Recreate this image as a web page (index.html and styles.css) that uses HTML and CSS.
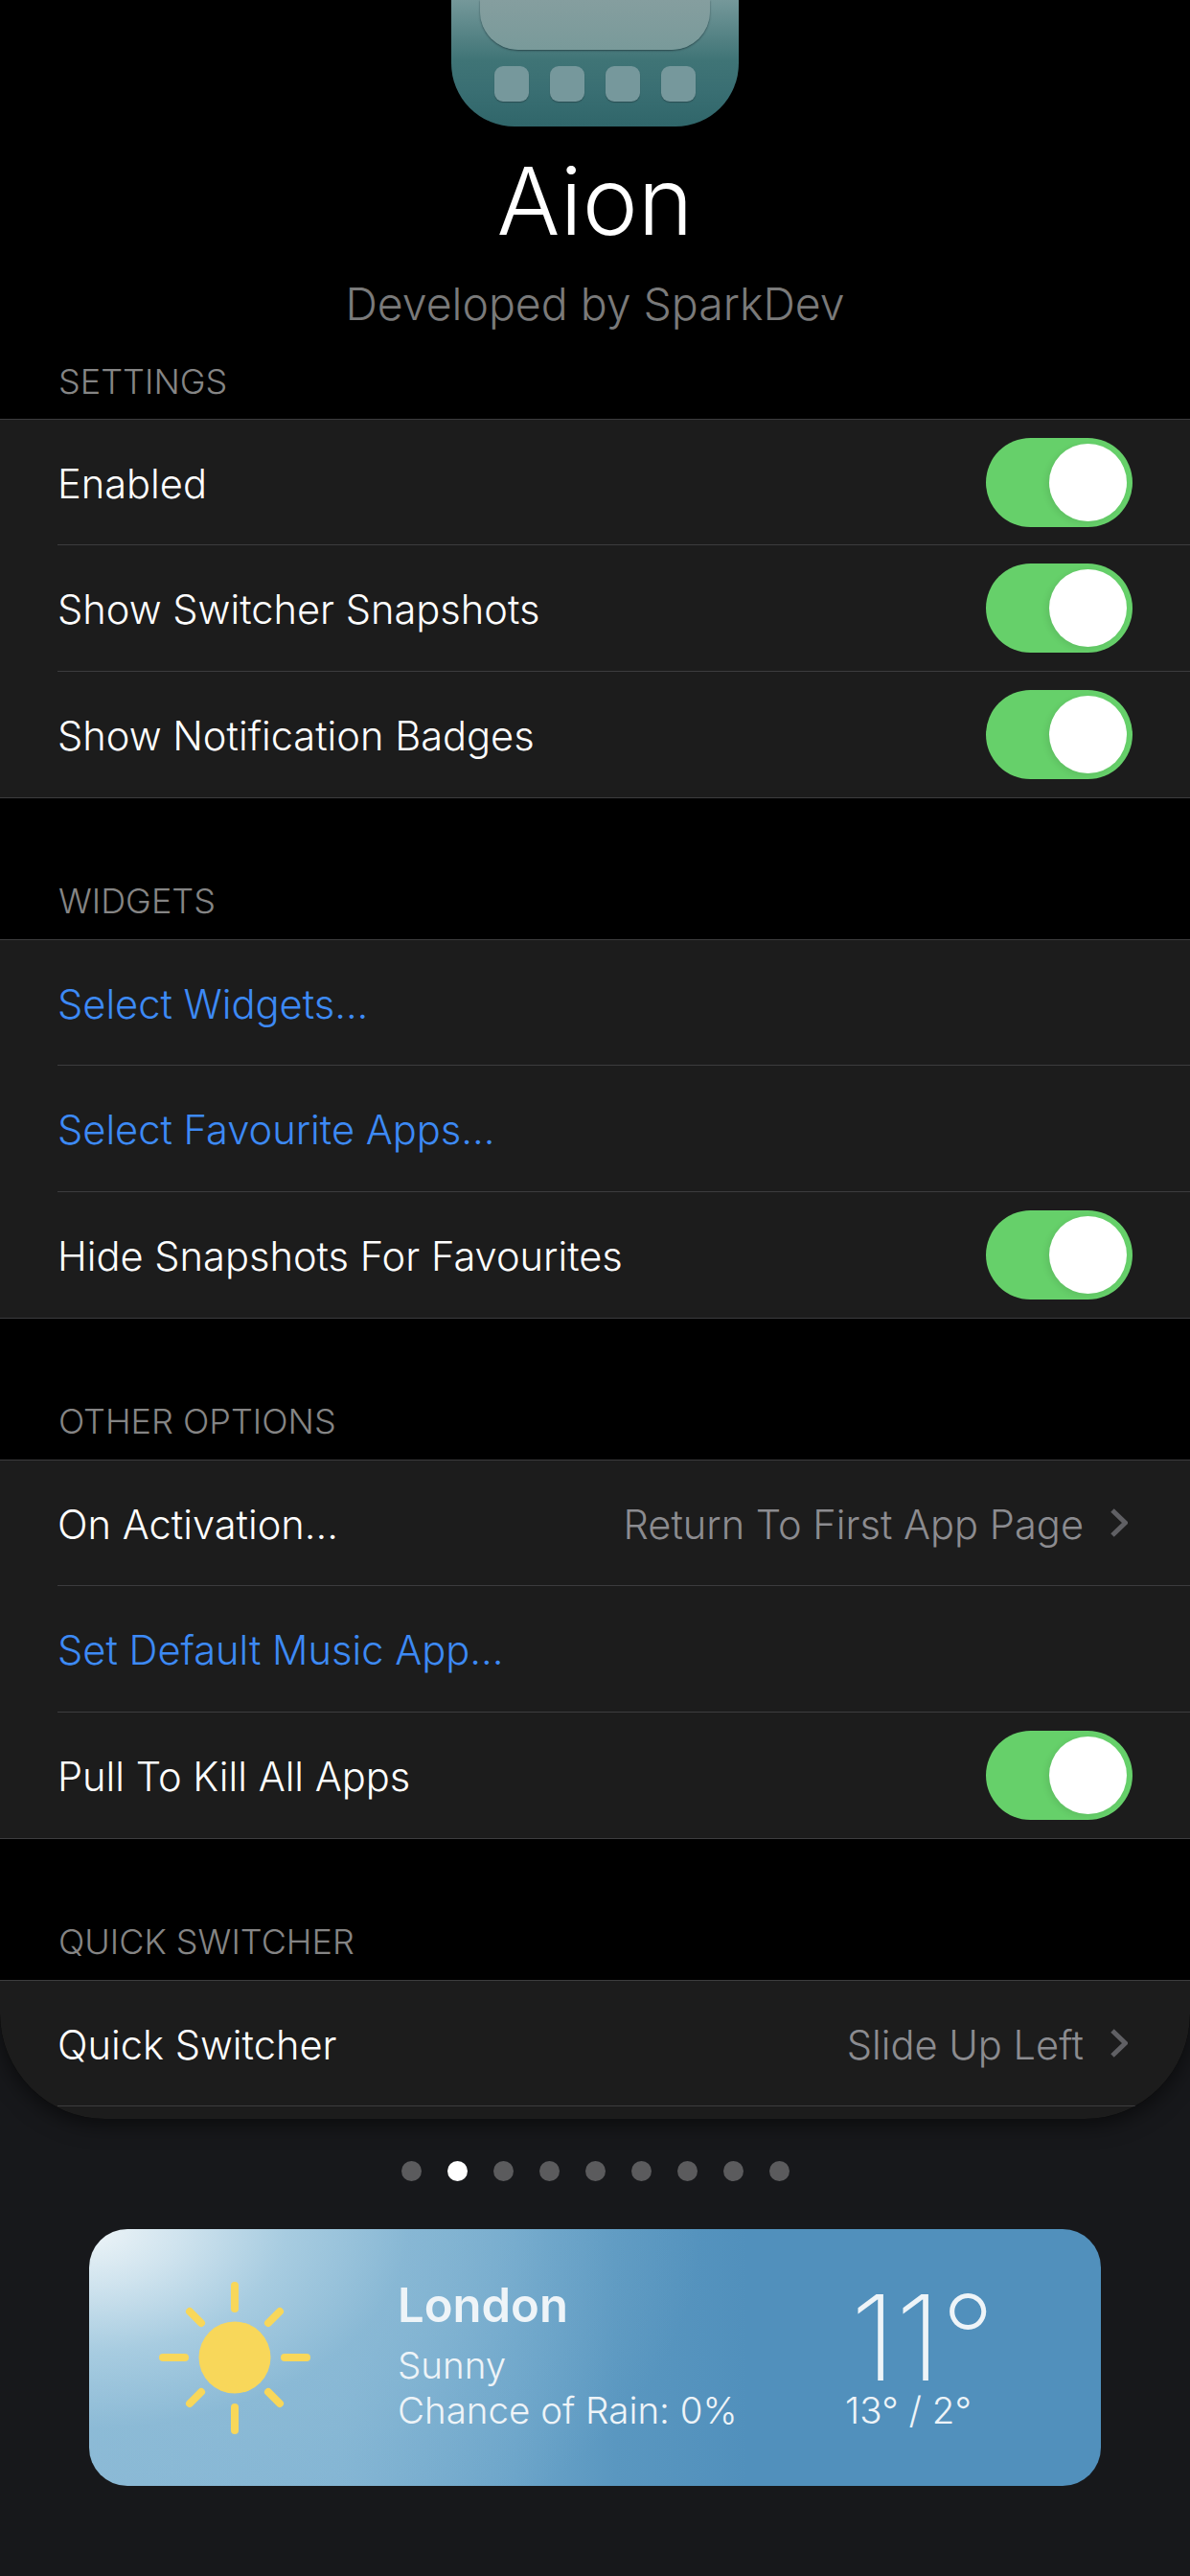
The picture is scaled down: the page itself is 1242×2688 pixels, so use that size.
FILE: index.html

```html
<!DOCTYPE html>
<html>
<head>
<meta charset="utf-8">
<title>Aion</title>
<link rel="stylesheet" href="styles.css">
</head>
<body>

<div class="panel">
  <div class="hero">
    <div class="app-icon">
      <div class="app-screen"></div>
      <div class="app-dock">
        <span class="dock-key"></span>
        <span class="dock-key"></span>
        <span class="dock-key"></span>
        <span class="dock-key"></span>
      </div>
    </div>
    <div class="hero-title">Aion</div>
    <div class="hero-sub">Developed by SparkDev</div>
  </div>

  <div class="section-label first">SETTINGS</div>
  <div class="group">
    <div class="row"><div class="row-in"><span class="row-text">Enabled</span><span class="switch"><span class="knob"></span></span></div></div>
    <div class="row"><div class="row-in"><span class="row-text">Show Switcher Snapshots</span><span class="switch"><span class="knob"></span></span></div></div>
    <div class="row"><div class="row-in"><span class="row-text">Show Notification Badges</span><span class="switch"><span class="knob"></span></span></div></div>
  </div>

  <div class="section-label">WIDGETS</div>
  <div class="group">
    <div class="row"><div class="row-in link"><span class="row-text">Select Widgets...</span></div></div>
    <div class="row"><div class="row-in link"><span class="row-text">Select Favourite Apps...</span></div></div>
    <div class="row"><div class="row-in"><span class="row-text">Hide Snapshots For Favourites</span><span class="switch"><span class="knob"></span></span></div></div>
  </div>

  <div class="section-label">OTHER OPTIONS</div>
  <div class="group">
    <div class="row"><div class="row-in nav"><span class="row-text">On Activation...</span><span class="row-text row-value">Return To First App Page</span>
      <svg class="chev" viewBox="0 0 18 30"><path d="M2 2 15.5 15 2 28"/></svg></div></div>
    <div class="row"><div class="row-in link"><span class="row-text">Set Default Music App...</span></div></div>
    <div class="row"><div class="row-in"><span class="row-text">Pull To Kill All Apps</span><span class="switch"><span class="knob"></span></span></div></div>
  </div>

  <div class="section-label">QUICK SWITCHER</div>
  <div class="group">
    <div class="row"><div class="row-in nav"><span class="row-text">Quick Switcher</span><span class="row-text row-value">Slide Up Left</span>
      <svg class="chev" viewBox="0 0 18 30"><path d="M2 2 15.5 15 2 28"/></svg></div></div>
    <div class="row"><div class="row-in"></div></div>
  </div>
</div>

<div class="dots">
  <span class="dot"></span>
  <span class="dot on"></span>
  <span class="dot"></span>
  <span class="dot"></span>
  <span class="dot"></span>
  <span class="dot"></span>
  <span class="dot"></span>
  <span class="dot"></span>
  <span class="dot"></span>
</div>

<div class="weather">
  <svg class="sun" viewBox="0 0 158 160">
    <circle cx="79" cy="80" r="37.5" fill="#f8d75a"/>
    <g stroke="#f8d75a" stroke-width="8" stroke-linecap="round">
      <path d="M79 5V29"/>
      <path d="M79 132V156"/>
      <path d="M4 80H27"/>
      <path d="M131 80H154"/>
      <path d="M32 32 44 44"/>
      <path d="M126 32 114 44"/>
      <path d="M32 128 44 116"/>
      <path d="M126 128 114 116"/>
    </g>
  </svg>
  <div class="w-info">
    <div class="w-city">London</div>
    <div class="w-line">Sunny</div>
    <div class="w-line">Chance of Rain: 0%</div>
  </div>
  <div class="w-temps">
    <div class="w-now">11°</div>
    <div class="w-line">13° / 2°</div>
  </div>
</div>

</body>
</html>
```

FILE: styles.css

```css
html, body {
  margin: 0;
  padding: 0;
}

body {
  width: 1242px;
  height: 2688px;
  overflow: hidden;
  background: #17181b;
  color: #fff;
  font-family: Inter, "Liberation Sans", sans-serif;
}

.panel {
  height: 2211px;
  overflow: hidden;
  background: #000;
  border-radius: 0 0 110px 110px;
  box-shadow: 0 6px 22px rgba(0, 0, 0, 0.55);
}

/* header */
.hero {
  display: flex;
  flex-direction: column;
  align-items: center;
}

.app-icon {
  width: 300px;
  height: 132px;
  box-sizing: border-box;
  padding: 0 30px;
  border-radius: 0 0 66px 66px;
  background: linear-gradient(180deg, #75989a 0, #3f7476 48%, #3a6f73 70%, #30666a 100%);
}

.app-screen {
  height: 52px;
  border-radius: 0 0 40px 40px;
  background: linear-gradient(180deg, #859e9f 0, #799a9a 100%);
  box-shadow: 0 1px 2px rgba(30, 50, 55, 0.7);
}

.app-dock {
  display: flex;
  gap: 22px;
  padding: 17px 0 0 15px;
}

.dock-key {
  width: 36px;
  height: 37px;
  border-radius: 9px;
  background: #76989c;
  box-shadow: 0 1px 1px rgba(30, 50, 55, 0.5);
}

.hero-title {
  margin-top: 16px;
  font-size: 98px;
  line-height: 124px;
  font-weight: 300;
}

.hero-sub {
  margin-top: 16px;
  font-size: 46.4px;
  line-height: 58px;
  font-weight: 300;
  color: #7a7a7a;
}

/* sections */
.section-label {
  height: 42px;
  padding: 86px 0 0 61px;
  margin-bottom: 19px;
  font-size: 36px;
  line-height: 42px;
  font-weight: 300;
  color: #858585;
}

.section-label.first {
  padding-top: 31px;
  margin-bottom: 18px;
}

.group {
  background: #1c1c1c;
  border-top: 1px solid #3c3c3e;
}

.row {
  height: 132px;
  box-sizing: border-box;
  padding-left: 60px;
  font-size: 41.6px;
}

.row:first-child {
  height: 131px;
}

.row:last-child {
  padding-left: 0;
}

.row-in {
  height: 100%;
  box-sizing: border-box;
  display: flex;
  align-items: center;
  justify-content: space-between;
  padding-right: 60px;
  border-bottom: 1px solid #3c3c3e;
  font-weight: 300;
}

.row:last-child .row-in {
  padding-left: 60px;
}

.row-text {
  padding-top: 3px;
}

.link {
  color: #3d8af5;
}

.nav {
  padding-right: 65px;
}

.row-value {
  margin-left: auto;
  color: #8c8c90;
}

.chev {
  width: 18px;
  height: 30px;
  margin-left: 28px;
  fill: none;
  stroke: #606064;
  stroke-width: 5;
}

/* toggles */
.switch {
  display: flex;
  justify-content: flex-end;
  align-items: center;
  width: 153px;
  height: 93px;
  box-sizing: border-box;
  padding-right: 6px;
  border-radius: 47px;
  background: #66d06a;
}

.knob {
  width: 81px;
  height: 81px;
  border-radius: 50%;
  background: #fff;
  box-shadow: -3px 2px 6px rgba(0, 0, 0, 0.08);
}

/* page dots */
.dots {
  display: flex;
  justify-content: center;
  gap: 27px;
  padding-top: 44px;
}

.dot {
  width: 21px;
  height: 21px;
  border-radius: 50%;
  background: #5b5b5d;
}

.dot.on {
  background: #fff;
}

/* weather card */
.weather {
  display: grid;
  grid-template-columns: 158px 1fr 260px;
  align-items: center;
  width: 1056px;
  height: 268px;
  box-sizing: border-box;
  margin: 50px 0 0 93px;
  padding: 0 71px 0 73px;
  border-radius: 40px;
  background:
    radial-gradient(ellipse 640px 400px at 0 0, #eef5f8 0, #cfe3ee 15%, rgba(169, 205, 225, 0.95) 32%, rgba(141, 187, 214, 0.7) 52%, rgba(141, 187, 214, 0.25) 75%, rgba(141, 187, 214, 0) 100%),
    linear-gradient(90deg, #8ab9d6 0, #82b4d3 25%, #6ba4c9 42%, #5a97c0 52%, #5190bc 65%, #5190bc 100%);
  color: #eef4f8;
}

.sun {
  display: block;
  width: 158px;
  height: 160px;
}

.w-info {
  padding-left: 91px;
  padding-bottom: 7px;
}

.w-city {
  font-size: 49px;
  line-height: 62px;
  font-weight: 600;
  margin-bottom: 8px;
}

.w-line {
  font-size: 38.5px;
  line-height: 47px;
  font-weight: 300;
}

.w-temps {
  text-align: center;
  padding-top: 4px;
}

.w-now {
  padding-left: 30px;
  font-size: 124px;
  line-height: 106px;
  font-weight: 200;
}
```
